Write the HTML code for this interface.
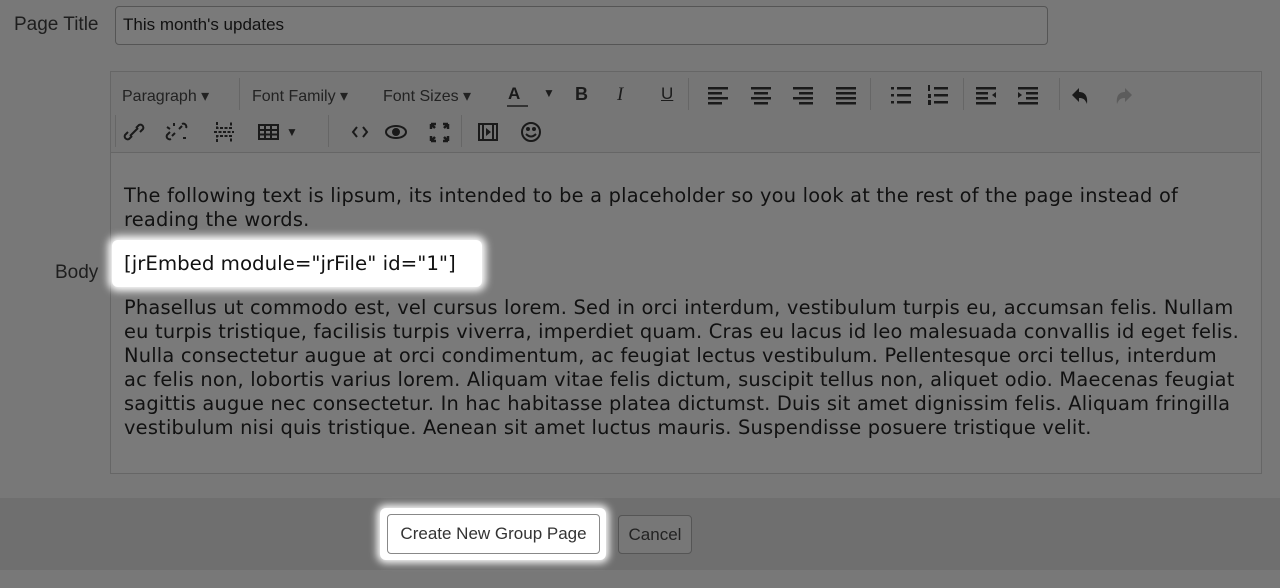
<!DOCTYPE html><html><head><style>
body{margin:0;width:1280px;height:588px;background:#787878;font-family:"Liberation Sans",sans-serif;position:relative;overflow:hidden;color:#1c1c1c}
.a{position:absolute}
.lbl{font-family:"Liberation Sans",sans-serif;font-size:19px;color:#1e1e1e}
.tb{font-size:16px;color:#222}
.c{font-family:"DejaVu Sans",sans-serif;font-size:19.4px;line-height:24px;color:#111;white-space:nowrap;letter-spacing:0.21px}
.sep{position:absolute;width:1px;background:#666}
svg{position:absolute}
</style></head><body>
<div class="a lbl" style="left:14px;top:14px">Page Title</div>
<div class="a" style="left:115px;top:6px;width:931px;height:37px;border:1px solid #555;border-radius:4px;background:#7a7a7a"></div>
<div class="a lbl" style="left:123px;top:15px;font-size:17px;color:#111">This month's updates</div>
<div class="a" style="left:110px;top:71px;width:1150px;height:401px;border:1px solid #666;background:#7a7a7a"></div>
<div class="a" style="left:111px;top:72px;width:1149px;height:80px;background:#767676;border-bottom:1px solid #666"></div>
<div class="a tb" style="left:122px;top:86px">Paragraph ▾</div>
<div class="a tb" style="left:252px;top:86px">Font Family ▾</div>
<div class="a tb" style="left:383px;top:86px">Font Sizes ▾</div>
<div class="sep" style="left:239px;top:78px;height:32px"></div>
<div class="sep" style="left:688px;top:78px;height:32px"></div>
<div class="sep" style="left:870px;top:78px;height:32px"></div>
<div class="sep" style="left:963px;top:78px;height:32px"></div>
<div class="sep" style="left:1059px;top:78px;height:32px"></div>
<div class="sep" style="left:115px;top:115px;height:32px"></div>
<div class="sep" style="left:328px;top:115px;height:32px"></div>
<div class="sep" style="left:461px;top:115px;height:32px"></div>
<div class="a" style="left:508px;top:84px;font-size:17px;font-weight:bold;color:#1a1a1a">A</div>
<div class="a" style="left:507px;top:105px;width:21px;height:2px;background:#333"></div>
<div class="a" style="left:543px;top:86px;font-size:12px">▼</div>
<div class="a" style="left:575px;top:84px;font-size:18px;font-weight:bold">B</div>
<div class="a" style="left:617px;top:84px;font-size:19px;font-style:italic;font-family:'Liberation Serif',serif">I</div>
<div class="a" style="left:661px;top:84px;font-size:17px;text-decoration:underline">U</div>
<svg style="left:700px;top:80px" width="450" height="30" fill="#1a1a1a">
<g><rect x="8" y="7" width="20" height="2.5"/><rect x="8" y="12" width="14" height="2.5"/><rect x="8" y="17" width="20" height="2.5"/><rect x="8" y="22" width="14" height="2.5"/></g>
<g transform="translate(43 0)"><rect x="8" y="7" width="20" height="2.5"/><rect x="11" y="12" width="14" height="2.5"/><rect x="8" y="17" width="20" height="2.5"/><rect x="11" y="22" width="14" height="2.5"/></g>
<g transform="translate(85 0)"><rect x="8" y="7" width="20" height="2.5"/><rect x="14" y="12" width="14" height="2.5"/><rect x="8" y="17" width="20" height="2.5"/><rect x="14" y="22" width="14" height="2.5"/></g>
<g transform="translate(128 0)"><rect x="8" y="7" width="20" height="2.5"/><rect x="8" y="12" width="20" height="2.5"/><rect x="8" y="17" width="20" height="2.5"/><rect x="8" y="22" width="20" height="2.5"/></g>
<g transform="translate(183 0)"><rect x="8" y="7" width="3" height="2.5"/><rect x="14" y="7" width="14" height="2.5"/><rect x="8" y="14" width="3" height="2.5"/><rect x="14" y="14" width="14" height="2.5"/><rect x="8" y="21" width="3" height="2.5"/><rect x="14" y="21" width="14" height="2.5"/></g>
<g transform="translate(220 0)"><rect x="8" y="5" width="2" height="6"/><rect x="14" y="7" width="14" height="2.5"/><rect x="8" y="14" width="3" height="4"/><rect x="14" y="14" width="14" height="2.5"/><rect x="8" y="20" width="3" height="5"/><rect x="14" y="21" width="14" height="2.5"/></g>
<g transform="translate(268 0)"><rect x="8" y="7" width="20" height="2.5"/><rect x="8" y="12" width="12" height="2.5"/><rect x="8" y="17" width="12" height="2.5"/><rect x="8" y="22" width="20" height="2.5"/><path d="M28 12v6l-4-3z"/></g>
<g transform="translate(310 0)"><rect x="8" y="7" width="20" height="2.5"/><rect x="16" y="12" width="12" height="2.5"/><rect x="16" y="17" width="12" height="2.5"/><rect x="8" y="22" width="20" height="2.5"/><path d="M8 12v6l4-3z"/></g>
<path d="M372 15l7-7v4c6 0 9 4 8 12-2-5-4-6-8-6v4z"/>
<path d="M432 15l-7-7v4c-6 0-9 4-8 12 2-5 4-6 8-6v4z" fill="#5c5c5c"/>
</svg>
<svg style="left:120px;top:118px" width="430" height="28" fill="none" stroke="#1a1a1a" stroke-width="2">
<path d="M10 18l8-8M8 14l-3 3a3 3 0 004 4l3-3M16 10l3-3a3 3 0 014 4l-3 3"/>
<path d="M52 18l3-3M59 11l3-3M50 14l-3 3a3 3 0 004 4M66 10a3 3 0 00-4-4M54 5v3M66 20h-3M47 9l3 2"/>
<path d="M97 4v6h14V4M97 24v-6h14v6M94 14h20" stroke-dasharray="3 1.5"/>
<rect x="139" y="7" width="19" height="14"/><path d="M139 12h19M139 16.5h19M145 7v14M151 7v14"/>
<path d="M237 9l-4 5 4 5M243 9l4 5-4 5"/>
<ellipse cx="276" cy="14" rx="10" ry="6"/><circle cx="276" cy="14" r="3" fill="#1a1a1a"/>
<path d="M311 6h5M311 6v5M311 6l4 4M328 6h-5M328 6v5M328 6l-4 4M311 23h5M311 23v-5M311 23l4-4M328 23h-5M328 23v-5M328 23l-4-4" stroke-width="2.5"/>
<rect x="359" y="6" width="18" height="16"/><path d="M363 6v16M373 6v16"/><path d="M366 10l5 4-5 4z" fill="#1a1a1a" stroke="none"/>
<circle cx="411" cy="14" r="9"/><circle cx="408" cy="11" r="1" fill="#1a1a1a"/><circle cx="414" cy="11" r="1" fill="#1a1a1a"/><path d="M406 16q5 5 10 0"/>
</svg>
<div class="a" style="left:286px;top:125px;font-size:12px">▼</div>
<div class="a c" style="left:124px;top:184px">The following text is lipsum, its intended to be a placeholder so you look at the rest of the page instead of<br>reading the words.</div>
<div class="a lbl" style="left:55px;top:262px">Body</div>
<div class="a" style="left:112px;top:240px;width:370px;height:47px;background:#fff;border-radius:6px;box-shadow:0 0 8px 4px #fff"></div>
<div class="a c" style="left:124px;top:252px;font-size:19.8px;letter-spacing:0">[jrEmbed module="jrFile" id="1"]</div>
<div class="a c" style="left:124px;top:296px">Phasellus ut commodo est, vel cursus lorem. Sed in orci interdum, vestibulum turpis eu, accumsan felis. Nullam<br>eu turpis tristique, facilisis turpis viverra, imperdiet quam. Cras eu lacus id leo malesuada convallis id eget felis.<br>Nulla consectetur augue at orci condimentum, ac feugiat lectus vestibulum. Pellentesque orci tellus, interdum<br>ac felis non, lobortis varius lorem. Aliquam vitae felis dictum, suscipit tellus non, aliquet odio. Maecenas feugiat<br>sagittis augue nec consectetur. In hac habitasse platea dictumst. Duis sit amet dignissim felis. Aliquam fringilla<br>vestibulum nisi quis tristique. Aenean sit amet luctus mauris. Suspendisse posuere tristique velit.</div>
<div class="a" style="left:0;top:498px;width:1280px;height:72px;background:#6f6f6f"></div>
<div class="a" style="left:380px;top:508px;width:226px;height:52px;background:#fff;border-radius:6px;box-shadow:0 0 8px 3px #fff"></div>
<div class="a" style="left:387px;top:514px;width:211px;height:38px;border:1px solid #888;border-radius:4px;background:#fff;font-size:17px;line-height:38px;text-align:center;color:#333">Create New Group Page</div>
<div class="a" style="left:618px;top:515px;width:72px;height:37px;border:1px solid #555;border-radius:4px;background:#777;font-size:17px;line-height:37px;text-align:center;color:#222">Cancel</div>
</body></html>
